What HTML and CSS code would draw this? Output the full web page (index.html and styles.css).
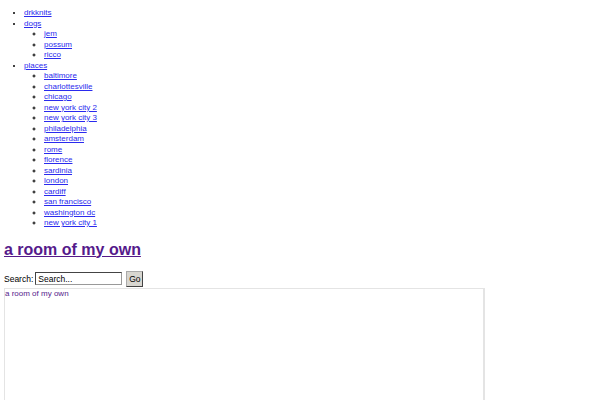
FILE: index.html
```html
<!DOCTYPE html>
<html>
<head>
<meta charset="utf-8">
<link rel="stylesheet" href="styles.css">
</head>
<body>
<ul class="nav">
  <li><a href="#">drkknits</a></li>
  <li><a href="#">dogs</a>
    <ul>
      <li><a href="#">jem</a></li>
      <li><a href="#">possum</a></li>
      <li><a href="#">ricco</a></li>
    </ul>
  </li>
  <li><a href="#">places</a>
    <ul>
      <li><a href="#">baltimore</a></li>
      <li><a href="#">charlottesville</a></li>
      <li><a href="#">chicago</a></li>
      <li><a href="#">new york city 2</a></li>
      <li><a href="#">new york city 3</a></li>
      <li><a href="#">philadelphia</a></li>
      <li><a href="#">amsterdam</a></li>
      <li><a href="#">rome</a></li>
      <li><a href="#">florence</a></li>
      <li><a href="#">sardinia</a></li>
      <li><a href="#">london</a></li>
      <li><a href="#">cardiff</a></li>
      <li><a href="#">san francisco</a></li>
      <li><a href="#">washington dc</a></li>
      <li><a href="#">new york city 1</a></li>
    </ul>
  </li>
</ul>
<h1 class="title"><a href="#">a room of my own</a></h1>
<form class="search">
  <label class="search-label">Search:</label>
  <input class="search-input" type="text" value="Search...">
  <button class="search-btn" type="button">Go</button>
</form>
<div class="frame">
  <div class="frame-title">a room of my own</div>
</div>
</body>
</html>
```
FILE: styles.css
```css
html, body {
  margin: 0;
  padding: 0;
  background: #fff;
}
body {
  padding: 0 4px;
  font-family: "Liberation Sans", Arial, sans-serif;
  overflow: hidden;
}
.nav {
  margin: 8px 0 0 0;
  padding-left: 20px;
  font-size: 8px;
  line-height: 10.5px;
  list-style: disc;
}
.nav ul {
  margin: 0;
  padding-left: 20px;
  list-style: circle;
}
.nav a {
  color: #2a2aee;
  text-decoration: underline;
}
.title {
  margin: 11px 0 0 0;
  font-size: 16px;
  line-height: 20px;
  font-weight: bold;
}
.title a {
  color: #551a8b;
  text-decoration: underline;
}
.search {
  margin: 11px 0 0 0;
  display: flex;
  align-items: center;
  height: 16px;
  font-size: 8.5px;
  color: #000;
}
.search-label {
  margin-right: 2px;
}
.search-input {
  box-sizing: border-box;
  width: 87px;
  height: 13px;
  padding: 0 2px;
  margin: 0;
  font-family: "Liberation Sans", Arial, sans-serif;
  font-size: 8.5px;
  border: 1px solid #999;
  border-top-color: #444;
  border-left-color: #444;
  background: #fff;
}
.search-btn {
  box-sizing: border-box;
  width: 17px;
  height: 16px;
  margin: 0 0 0 4px;
  padding: 0;
  font-family: "Liberation Sans", Arial, sans-serif;
  font-size: 8.5px;
  background: #d8d6d0;
  border: 1px solid #aaa;
  border-right-color: #444;
  border-bottom-color: #444;
  color: #000;
}
.frame {
  margin-top: 1px;
  box-sizing: border-box;
  width: 481px;
  height: 200px;
  border: 1px solid #e4e4e4;
  border-width: 1px 2px 2px 1px;
}
.frame-title {
  font-size: 8px;
  line-height: 9px;
  padding: 0;
  color: #551a8b;
}
```
